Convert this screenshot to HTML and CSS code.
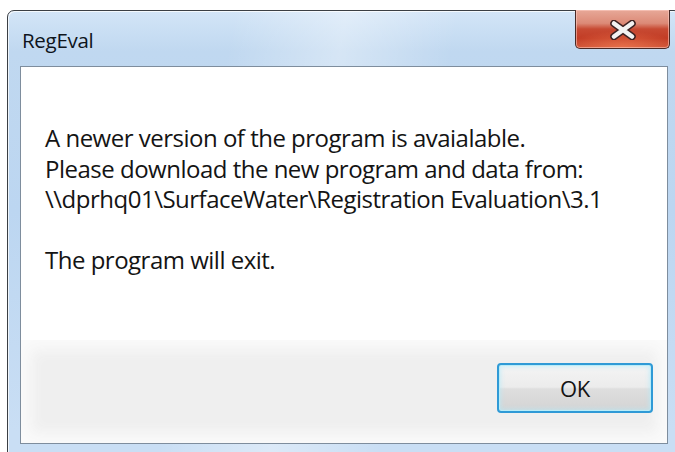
FILE: index.html
```html
<!DOCTYPE html>
<html lang="en">
<head>
<meta charset="utf-8">
<title>RegEval</title>
<link rel="stylesheet" href="styles.css">
</head>
<body>
  <div class="window">
    <div class="titlebar">
      <span class="title">RegEval</span>
      <button class="close" aria-label="Close">
        <svg width="26" height="20" viewBox="0 0 26 20">
          <g stroke-linecap="round">
            <path d="M4 3.5 L22 16.5 M4 16.5 L22 3.5" stroke="#3d2222" stroke-width="7.5"/>
            <path d="M4 3.5 L22 16.5 M4 16.5 L22 3.5" stroke="#f2f2f2" stroke-width="4.6"/>
          </g>
        </svg>
      </button>
    </div>
    <div class="client">
      <div class="message">
        <p>A newer version of the program is avaialable.<br>Please download the new program and data from:<br>\\dprhq01\SurfaceWater\Registration Evaluation\3.1</p>
        <p>The program will exit.</p>
      </div>
      <div class="footer">
        <button class="ok">OK</button>
      </div>
    </div>
  </div>
</body>
</html>
```

FILE: styles.css
```css
html, body {
  margin: 0;
  height: 452px;
  overflow: hidden;
  background: #ffffff;
}

body {
  padding: 10px 0 0 7px;
  box-sizing: border-box;
  font-family: "Open Sans", "Noto Sans", sans-serif;
}

/* Aero style frame */
.window {
  width: 674px;
  height: 460px;
  box-sizing: border-box;
  border: 1px solid #3b3f44;
  border-radius: 7px 7px 0 0;
  background:
    linear-gradient(100deg, rgba(255,255,255,0) 30%, rgba(255,255,255,0.35) 45%, rgba(255,255,255,0) 60%),
    linear-gradient(180deg, #d3e5f7 0px, #c0d8f0 40px, #bcd6f1 200px, #c9def4 420px);
  box-shadow: inset 1px 1px 0 rgba(255,255,255,0.75);
  padding: 0 12px 0 12px;
  display: flex;
  flex-direction: column;
}

.titlebar {
  height: 55px;
  display: flex;
  align-items: flex-start;
  flex-shrink: 0;
}

.title {
  margin: 15px 0 0 2px;
  font-size: 20.5px;
  line-height: 28px;
  color: #0e141c;
  letter-spacing: -0.3px;
}

.close {
  margin: -1px -2px 0 auto;
  width: 95px;
  height: 39px;
  padding: 0;
  border: 1px solid #4a2a26;
  border-top: none;
  border-radius: 0 0 5px 5px;
  background:
    radial-gradient(ellipse 60% 45% at 50% 100%, rgba(238,120,80,0.8), rgba(238,120,80,0) 100%),
    linear-gradient(180deg, #e7a898 0%, #dc8a77 35%, #c74a33 50%, #c23c25 75%, #cc5236 100%);
  box-shadow: inset 0 0 0 1px rgba(255,210,200,0.55);
  display: flex;
  align-items: center;
  justify-content: center;
}

.close svg {
  display: block;
  margin-top: 1px;
}

/* white dialog body */
.client {
  height: 378px;
  box-sizing: border-box;
  border: 1px solid #7e8d9d;
  background: #ffffff;
  display: flex;
  flex-direction: column;
}

.message {
  flex: 1;
  padding: 56px 0 0 24px;
  font-size: 24px;
  line-height: 30.5px;
  color: #141414;
  letter-spacing: -0.5px;
}

.message p {
  margin: 0 0 30.5px 0;
}

.footer {
  height: 103px;
  box-sizing: border-box;
  padding: 23px 14px 30px 0;
  display: flex;
  justify-content: flex-end;
  align-items: flex-start;
  background: #efefef;
  box-shadow: inset 0 0 14px 10px #fafafa;
}

.ok {
  width: 156px;
  height: 50px;
  border: 2px solid #2f9ad6;
  border-radius: 4px;
  background: linear-gradient(180deg, #f4f4f4 0%, #ececec 48%, #dedede 52%, #d4d4d4 100%);
  box-shadow: inset 0 0 0 1px #b9ecf8, inset 0 0 4px 2px rgba(180,235,250,0.6);
  font-family: "Open Sans", "Noto Sans", sans-serif;
  font-size: 22px;
  color: #141414;
  padding: 0;
  letter-spacing: -0.3px;
}
```
